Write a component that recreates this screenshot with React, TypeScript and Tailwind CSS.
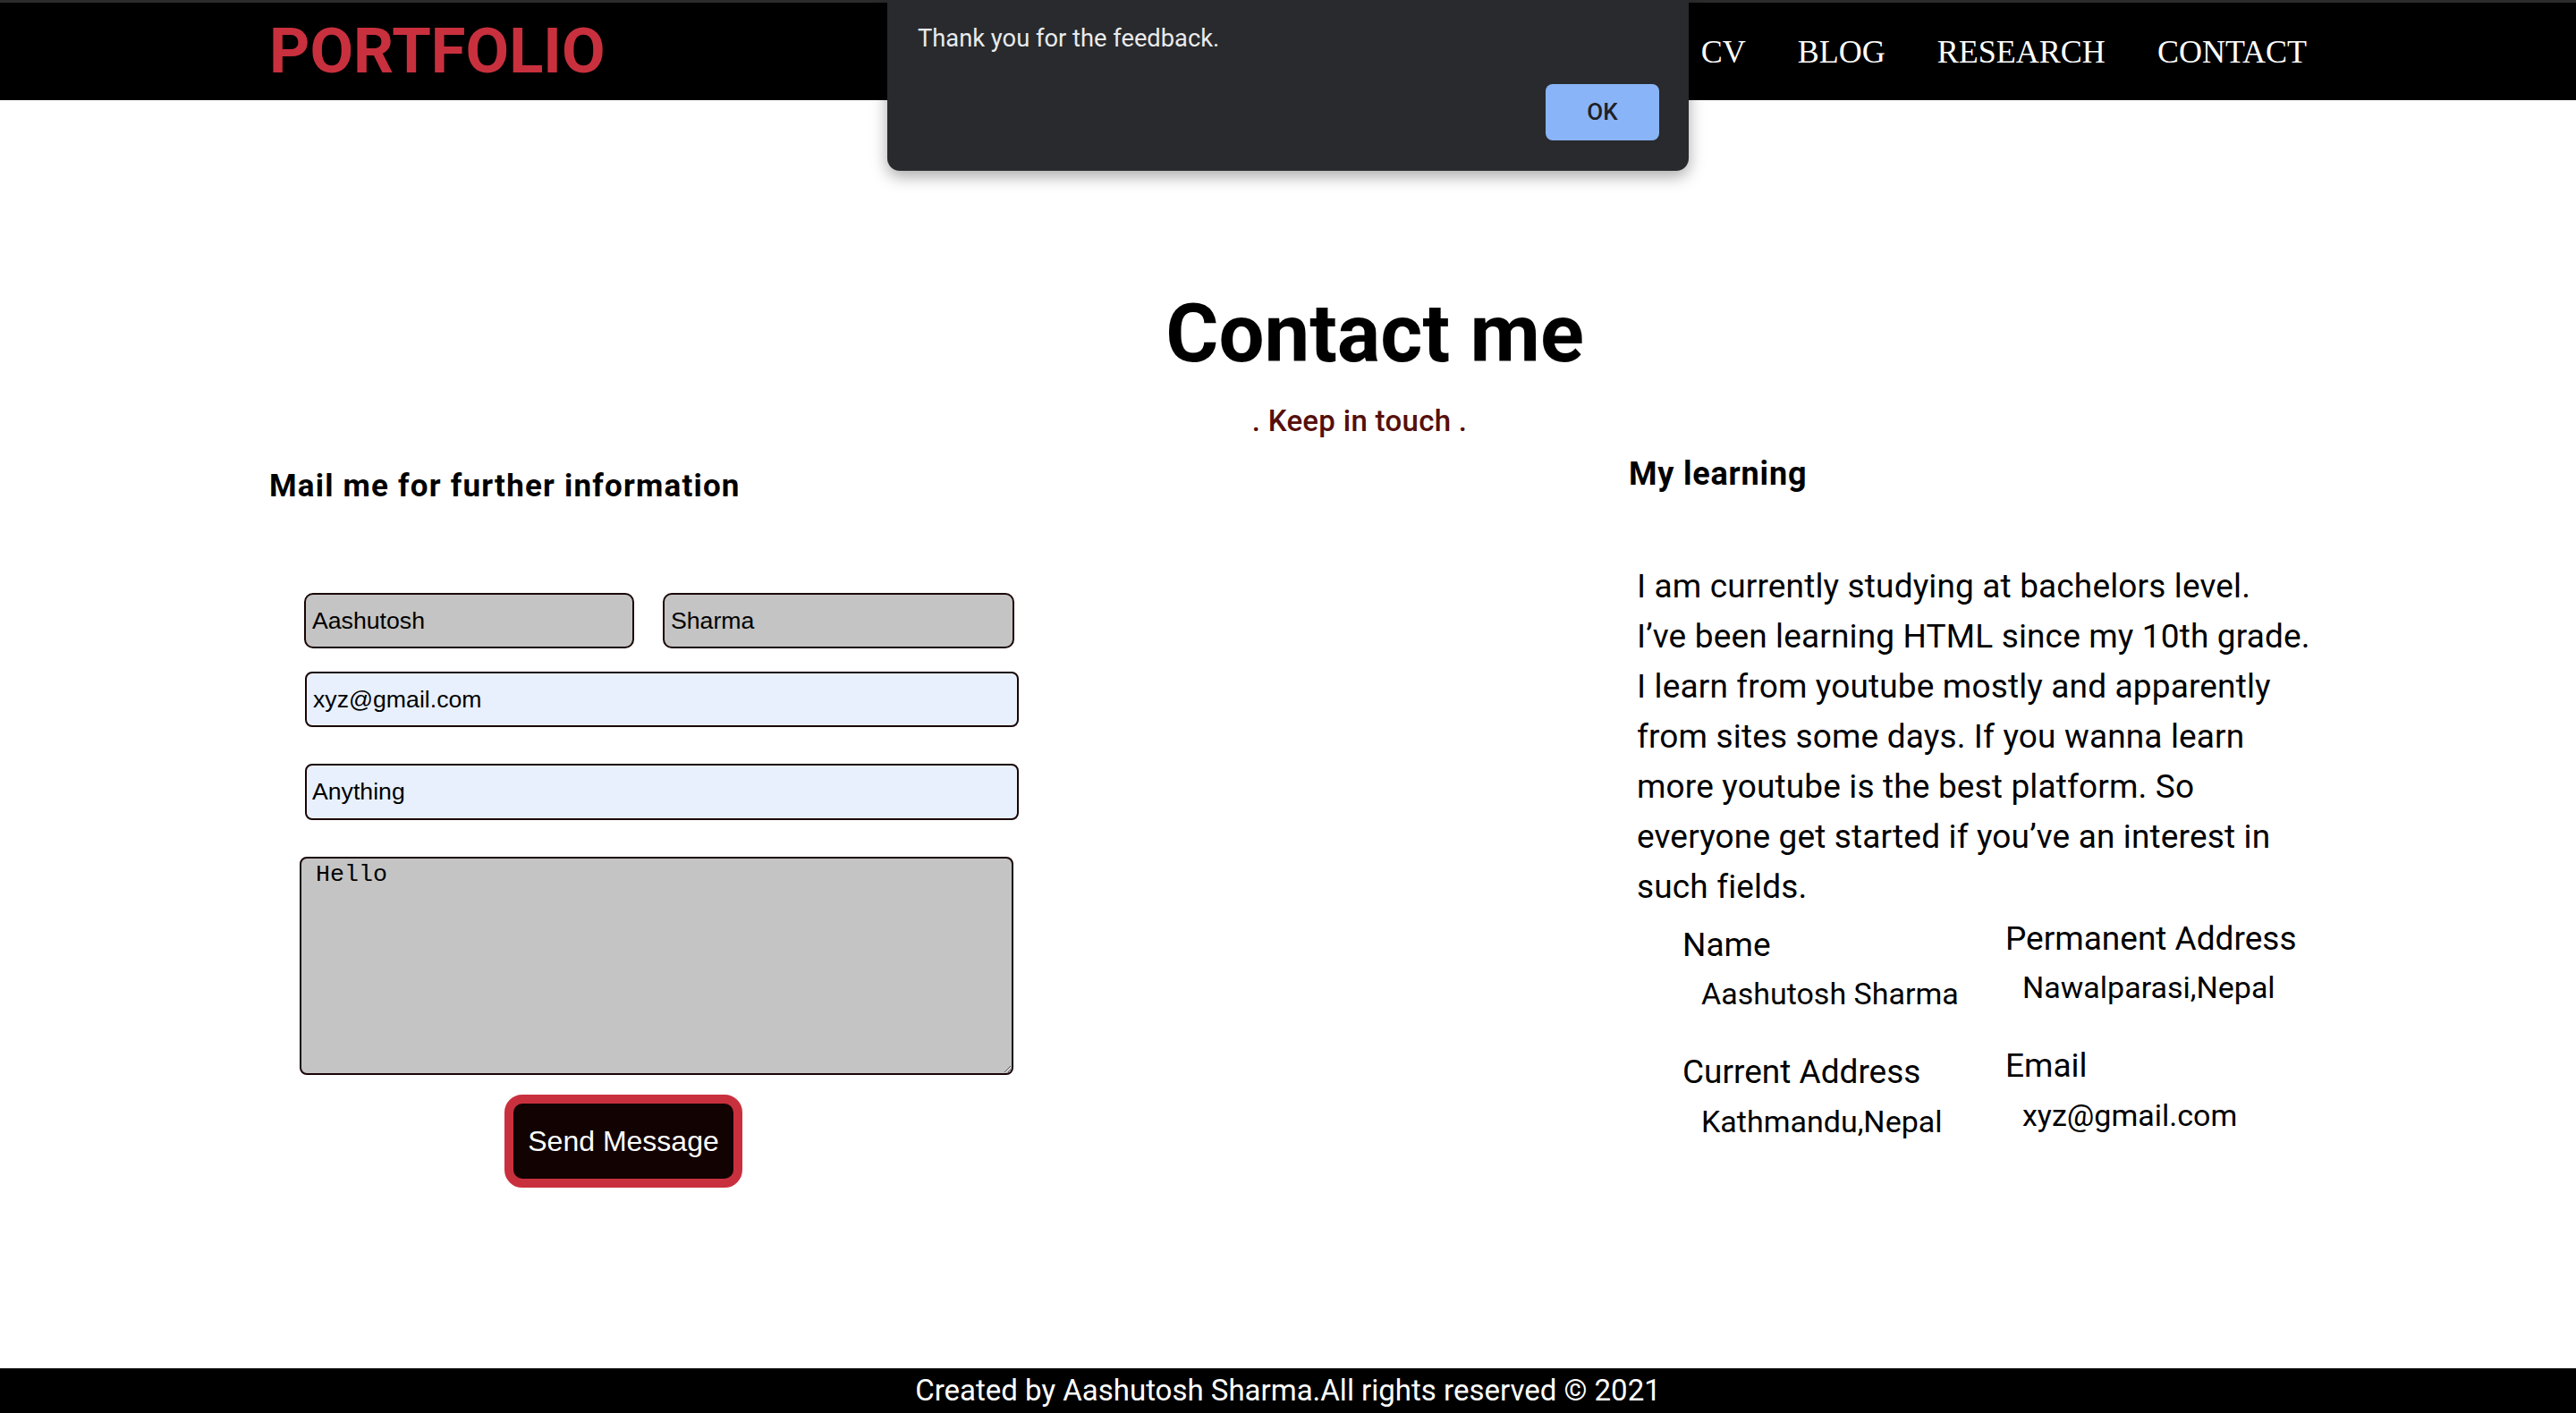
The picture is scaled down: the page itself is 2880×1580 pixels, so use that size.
import React from "react";

export default function App() {
  return (
    <div className="relative flex h-[1580px] w-[2880px] flex-col overflow-hidden bg-white font-['Roboto',sans-serif] text-black">
      {/* NAVBAR */}
      <nav className="flex h-[112px] items-center justify-between border-t-[3px] border-[#2b2b2b] bg-black pl-[301px] pr-[301px]">
        <span className="text-[70.5px] font-bold leading-none text-[#c9303e]">PORTFOLIO</span>
        <ul className="flex gap-[58px] font-['Liberation_Serif',serif] text-[36px] leading-none text-white">
          <li>CV</li>
          <li>BLOG</li>
          <li>RESEARCH</li>
          <li>CONTACT</li>
        </ul>
      </nav>

      {/* MAIN */}
      <main className="flex flex-1 flex-col">
        <h1 className="mt-[216px] pl-[194px] text-center text-[90.5px] font-bold leading-[90px]">Contact me</h1>
        <p className="mt-[36px] pl-[160px] text-center text-[33px] font-medium leading-[33px] tracking-[0.3px] text-[#560f0b]">
          . Keep in touch .
        </p>

        <div className="flex items-start">
          {/* LEFT COLUMN */}
          <div className="flex w-[1820px] flex-col pl-[301px]">
            <h2 className="mt-[39px] text-[35px] font-bold leading-[35px] tracking-[1.2px]">Mail me for further information</h2>

            <form className="flex flex-col font-['Liberation_Sans',Arial,sans-serif]">
              <div className="ml-[39px] mt-[102px] flex gap-[32px]">
                <input
                  readOnly
                  value="Aashutosh"
                  className="h-[62px] w-[369px] rounded-[10px] border-2 border-[#1a0505] bg-[#c4c4c4] px-[7px] text-[26.67px] text-black outline-none"
                />
                <input
                  readOnly
                  value="Sharma"
                  className="h-[62px] w-[393px] rounded-[10px] border-2 border-[#1a0505] bg-[#c4c4c4] px-[7px] text-[26.67px] text-black outline-none"
                />
              </div>
              <input
                readOnly
                value="xyz@gmail.com"
                className="ml-[40px] mt-[26px] h-[62px] w-[798px] rounded-[8px] border-2 border-[#1a0505] bg-[#e8f0fe] px-[7px] text-[26.67px] text-black outline-none"
              />
              <input
                readOnly
                value="Anything"
                className="ml-[40px] mt-[41px] h-[63px] w-[798px] rounded-[8px] border-2 border-[#1a0505] bg-[#e8f0fe] px-[6px] text-[26.67px] text-black outline-none"
              />
              <textarea
                readOnly
                defaultValue="Hello"
                className="ml-[34px] mt-[41px] h-[244px] w-[798px] resize rounded-[8px] border-2 border-[#1a0505] bg-[#c4c4c4] px-[16px] pt-[5px] font-['Liberation_Mono',monospace] text-[26.67px] leading-[26px] text-black outline-none"
              />
              <button
                type="button"
                className="ml-[263px] mt-[22px] flex h-[104px] w-[266px] items-center justify-center rounded-[20px] border-[10px] border-[#c9303e] bg-[#120202] text-[32px] text-white"
              >
                Send Message
              </button>
            </form>
          </div>

          {/* RIGHT COLUMN */}
          <div className="flex flex-1 flex-col">
            <h2 className="ml-[1px] mt-[25px] text-[36px] font-bold leading-[36px] tracking-[0.8px]">My learning</h2>
            <p className="ml-[10px] mt-[80px] whitespace-nowrap text-[37px] leading-[56px] tracking-[0.15px]">
              I am currently studying at bachelors level.
              <br />
              I’ve been learning HTML since my 10th grade.
              <br />
              I learn from youtube mostly and apparently
              <br />
              from sites some days. If you wanna learn
              <br />
              more youtube is the best platform. So
              <br />
              everyone get started if you’ve an interest in
              <br />
              such fields.
            </p>

            <div className="ml-[61px] mt-[17px] flex">
              <div className="flex w-[361px] flex-col">
                <div className="text-[37px] leading-[40px]">Name</div>
                <div className="ml-[21px] mt-[14px] text-[34px] leading-[40px]">Aashutosh Sharma</div>
                <div className="mt-[48px] text-[37px] leading-[40px]">Current Address</div>
                <div className="ml-[21px] mt-[15px] text-[34px] leading-[40px]">Kathmandu,Nepal</div>
              </div>
              <div className="-mt-[7px] flex flex-col">
                <div className="text-[37px] leading-[40px]">Permanent Address</div>
                <div className="ml-[19px] mt-[14px] text-[34px] leading-[40px]">Nawalparasi,Nepal</div>
                <div className="mt-[48px] text-[37px] leading-[40px]">Email</div>
                <div className="ml-[19px] mt-[15px] text-[34px] leading-[40px]">xyz@gmail.com</div>
              </div>
            </div>
          </div>
        </div>
      </main>

      {/* FOOTER */}
      <footer className="h-[50px] bg-black text-center text-[33px] leading-[50px] text-white">
        Created by Aashutosh Sharma.All rights reserved © 2021
      </footer>

      {/* ALERT DIALOG */}
      <div className="absolute left-[992px] top-0 h-[191px] w-[896px] rounded-b-[14px] bg-[#292a2d] shadow-[0_6px_18px_rgba(0,0,0,0.35)]">
        <p className="pl-[34px] pt-[27px] text-[27.3px] leading-[32px] text-[#e8eaed]">Thank you for the feedback.</p>
        <button
          type="button"
          className="absolute bottom-[34px] right-[33px] h-[63px] w-[127px] rounded-[8px] bg-[#8ab4f8] text-[26px] font-medium text-[#202124]"
        >
          OK
        </button>
      </div>
    </div>
  );
}
